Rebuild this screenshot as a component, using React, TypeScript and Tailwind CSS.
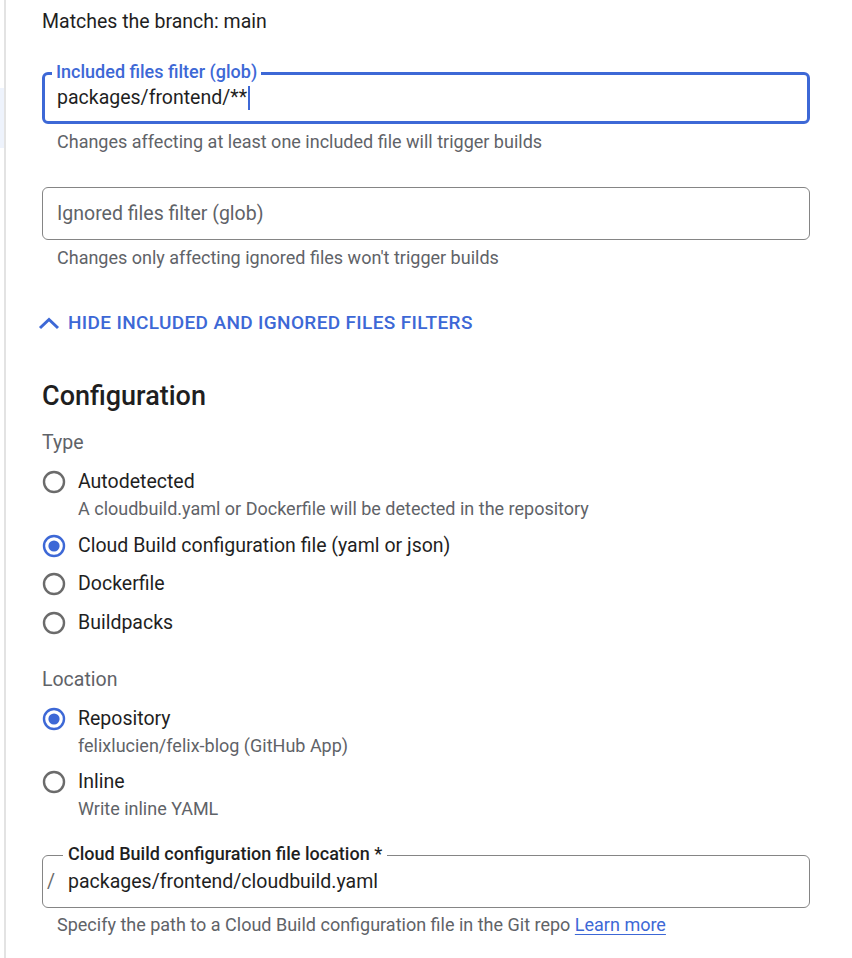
import React from "react";

const BLUE = "#3d68d6";

function Radio({ checked }: { checked?: boolean }) {
  return (
    <svg width="24" height="24" viewBox="0 0 24 24" className="shrink-0">
      <circle cx="12" cy="12" r="10" fill="none" stroke={checked ? BLUE : "#6b6b6b"} strokeWidth="2.4" />
      {checked && <circle cx="12" cy="12" r="5.6" fill={BLUE} />}
    </svg>
  );
}

function Option({ label, sub, checked, mt }: { label: string; sub?: string; checked?: boolean; mt: string }) {
  return (
    <div className={mt}>
      <div className="flex items-center h-[26px]">
        <Radio checked={checked} />
        <span className="ml-[12px] text-[19.5px] leading-[26px] text-[#1f1f1f]">{label}</span>
      </div>
      {sub && <div className="ml-[36px] mt-[4px] text-[18px] leading-[20px] text-[#5f6368]">{sub}</div>}
    </div>
  );
}

export default function App() {
  return (
    <div className="flex min-h-[958px] bg-white" style={{ fontFamily: "Roboto, 'Noto Sans', sans-serif" }}>
      <div className="w-[4px] shrink-0 relative">
        <div className="absolute left-0 top-[88px] w-[4px] h-[60px] bg-[#eef3fc]" />
      </div>
      <div className="w-[2px] shrink-0 bg-[#e3e3e3]" />
      <div className="flex-1 pl-[36px] pr-[42px] pt-[10px]">
        <div className="text-[19.5px] leading-[24px] text-[#1f1f1f]">Matches the branch: main</div>

        {/* Included files filter */}
        <div className="relative mt-[38px] h-[52px] rounded-[6px] border-[3px] border-[#3d68d6] flex items-center pl-[12px]">
          <span className="absolute left-[7px] top-[-14px] bg-white px-[4px] text-[18px] leading-[22px] font-medium text-[#3d68d6]">
            Included files filter (glob)
          </span>
          <span className="text-[19.5px] text-[#1f1f1f] leading-[24px]">packages/frontend/**</span>
          <span className="w-[2px] h-[24px] bg-[#3d68d6] ml-[1px]" />
        </div>
        <div className="mt-[8px] pl-[15px] text-[18px] leading-[20px] text-[#5f6368]">
          Changes affecting at least one included file will trigger builds
        </div>

        {/* Ignored files filter */}
        <div className="mt-[35px] h-[53px] rounded-[6px] border border-[#858585] flex items-center pl-[14px]">
          <span className="text-[19.5px] text-[#5f6368] leading-[24px]">Ignored files filter (glob)</span>
        </div>
        <div className="mt-[8px] pl-[15px] text-[18px] leading-[20px] text-[#5f6368]">
          Changes only affecting ignored files won't trigger builds
        </div>

        <div className="mt-[45px] flex items-center h-[20px] ml-[-5px]">
          <svg width="24" height="16" viewBox="0 0 24 16">
            <path d="M3 13 L12 4.5 L21 13" fill="none" stroke={BLUE} strokeWidth="3" />
          </svg>
          <span className="ml-[7px] text-[19px] font-medium text-[#3d68d6] tracking-[0.35px]">
            HIDE INCLUDED AND IGNORED FILES FILTERS
          </span>
        </div>

        <div className="mt-[47px] text-[27px] leading-[32px] font-medium text-[#1f1f1f]">Configuration</div>
        <div className="mt-[19px] text-[19.5px] leading-[24px] text-[#5f6368]">Type</div>

        <Option mt="mt-[14px]" label="Autodetected" sub="A cloudbuild.yaml or Dockerfile will be detected in the repository" />
        <Option mt="mt-[14px]" label="Cloud Build configuration file (yaml or json)" checked />
        <Option mt="mt-[12px]" label="Dockerfile" />
        <Option mt="mt-[13px]" label="Buildpacks" />

        <div className="mt-[32px] text-[19.5px] leading-[24px] text-[#5f6368]">Location</div>
        <Option mt="mt-[14px]" label="Repository" checked sub="felixlucien/felix-blog (GitHub App)" />
        <Option mt="mt-[13px]" label="Inline" sub="Write inline YAML" />

        {/* Config location */}
        <div className="relative mt-[36px] h-[53px] rounded-[6px] border border-[#858585] flex items-center pl-[4px]">
          <span className="absolute left-[20px] top-[-13px] bg-white px-[5px] text-[18px] leading-[22px] font-medium text-[#1f1f1f]">
            Cloud Build configuration file location *
          </span>
          <span className="text-[19.5px] text-[#6b6b6b] leading-[24px]">/</span>
          <span className="ml-[13px] text-[19.5px] text-[#1f1f1f] leading-[24px]">packages/frontend/cloudbuild.yaml</span>
        </div>
        <div className="mt-[7px] pl-[15px] text-[18px] leading-[20px] text-[#5f6368]">
          Specify the path to a Cloud Build configuration file in the Git repo{" "}
          <span className="text-[#3d68d6] underline underline-offset-[3px]">Learn more</span>
        </div>
      </div>
    </div>
  );
}
